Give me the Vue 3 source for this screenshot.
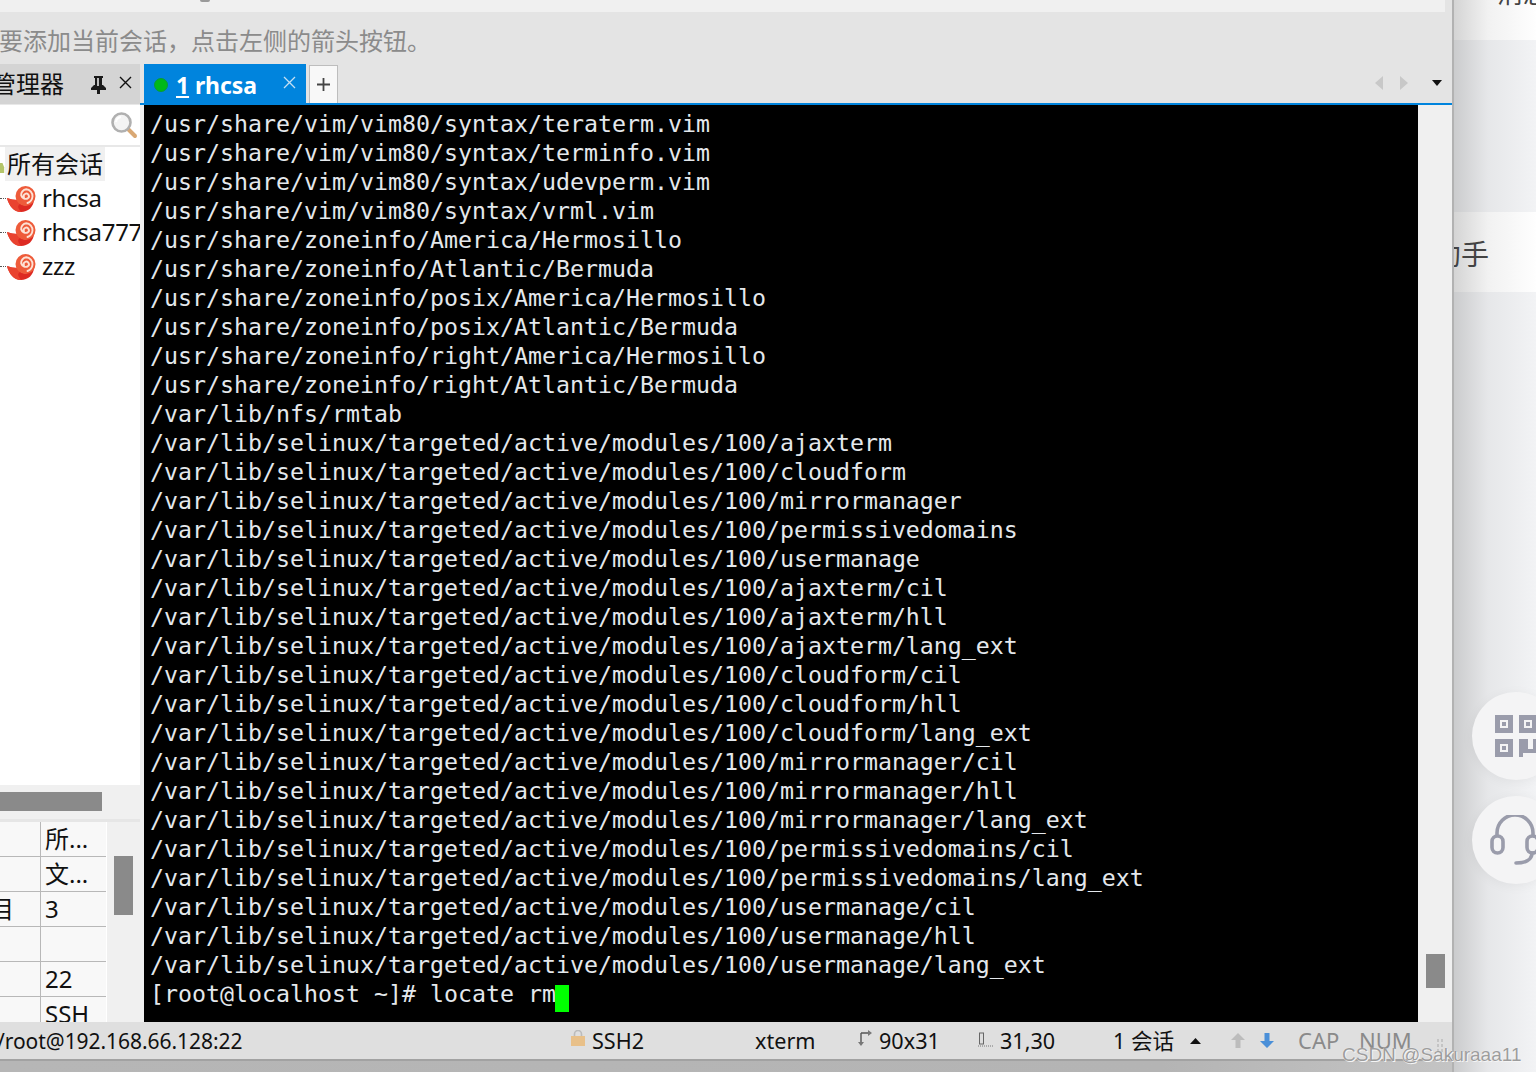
<script setup>
const lines = [
  '/usr/share/vim/vim80/syntax/teraterm.vim',
  '/usr/share/vim/vim80/syntax/terminfo.vim',
  '/usr/share/vim/vim80/syntax/udevperm.vim',
  '/usr/share/vim/vim80/syntax/vrml.vim',
  '/usr/share/zoneinfo/America/Hermosillo',
  '/usr/share/zoneinfo/Atlantic/Bermuda',
  '/usr/share/zoneinfo/posix/America/Hermosillo',
  '/usr/share/zoneinfo/posix/Atlantic/Bermuda',
  '/usr/share/zoneinfo/right/America/Hermosillo',
  '/usr/share/zoneinfo/right/Atlantic/Bermuda',
  '/var/lib/nfs/rmtab',
  '/var/lib/selinux/targeted/active/modules/100/ajaxterm',
  '/var/lib/selinux/targeted/active/modules/100/cloudform',
  '/var/lib/selinux/targeted/active/modules/100/mirrormanager',
  '/var/lib/selinux/targeted/active/modules/100/permissivedomains',
  '/var/lib/selinux/targeted/active/modules/100/usermanage',
  '/var/lib/selinux/targeted/active/modules/100/ajaxterm/cil',
  '/var/lib/selinux/targeted/active/modules/100/ajaxterm/hll',
  '/var/lib/selinux/targeted/active/modules/100/ajaxterm/lang_ext',
  '/var/lib/selinux/targeted/active/modules/100/cloudform/cil',
  '/var/lib/selinux/targeted/active/modules/100/cloudform/hll',
  '/var/lib/selinux/targeted/active/modules/100/cloudform/lang_ext',
  '/var/lib/selinux/targeted/active/modules/100/mirrormanager/cil',
  '/var/lib/selinux/targeted/active/modules/100/mirrormanager/hll',
  '/var/lib/selinux/targeted/active/modules/100/mirrormanager/lang_ext',
  '/var/lib/selinux/targeted/active/modules/100/permissivedomains/cil',
  '/var/lib/selinux/targeted/active/modules/100/permissivedomains/lang_ext',
  '/var/lib/selinux/targeted/active/modules/100/usermanage/cil',
  '/var/lib/selinux/targeted/active/modules/100/usermanage/hll',
  '/var/lib/selinux/targeted/active/modules/100/usermanage/lang_ext',
]
const sessions = ['rhcsa', 'rhcsa777', 'zzz']
const props = [
  ['', '所...'],
  ['', '文...'],
  ['目', '3'],
  ['', ''],
  ['', '22'],
  ['', 'SSH'],
]
</script>

<template>
  <div class="page">
    <div class="app">
      <div class="strip"><span class="stripmark"></span></div>
      <div class="hint">要添加当前会话，点击左侧的箭头按钮。</div>
      <div class="tabrow">
        <div class="panehead">
          <span class="panetitle">管理器</span>
          <svg class="pin" width="15" height="18" viewBox="0 0 15 18">
            <path d="M3 0h9v2h-1v7h1l3 3v2H9v4H6v-4H0v-2l3-3h1V2H3z" fill="#1a1a1a" />
            <path d="M6 2h2v8H6z" fill="#bdbdbd" />
          </svg>
          <svg class="paneclose" width="13" height="13" viewBox="0 0 13 13">
            <path d="M1 1l11 11M12 1L1 12" stroke="#111" stroke-width="1.4" fill="none" />
          </svg>
        </div>
        <div class="tab">
          <span class="dot"></span>
          <span class="tabname"><u>1</u> rhcsa</span>
          <svg class="tabclose" width="13" height="13" viewBox="0 0 13 13">
            <path d="M1 1l11 11M12 1L1 12" stroke="#c4dff3" stroke-width="1.3" fill="none" />
          </svg>
        </div>
        <div class="plus">
          <svg width="13" height="13" viewBox="0 0 13 13">
            <path d="M6.500 0v13M0 6.500h13" stroke="#444" stroke-width="1.800" fill="none" />
          </svg>
        </div>
        <div class="tabnav">
          <svg width="8" height="14" viewBox="0 0 8 14"><path d="M8 0v14L0 7z" fill="#c8c8c8" /></svg>
          <svg width="8" height="14" viewBox="0 0 8 14"><path d="M0 0v14l8-7z" fill="#c8c8c8" /></svg>
          <svg class="drop" width="10" height="6" viewBox="0 0 10 6"><path d="M0 0h10L5 6z" fill="#111" /></svg>
        </div>
      </div>
      <div class="main">
        <aside class="sidebar">
          <div class="panel">
            <div class="search">
              <svg width="28" height="28" viewBox="0 0 28 28">
                <path d="M18 18l7 7" stroke="#d9a874" stroke-width="4" stroke-linecap="round" />
                <circle cx="11.500" cy="11.500" r="9" fill="#f4f4f4" stroke="#b0b0b0" stroke-width="2.600" />
                <path d="M6 11a6 6 0 0 1 5-5" stroke="#fff" stroke-width="2" fill="none" />
              </svg>
            </div>
            <div class="tree">
              <div class="rootnode">
                <svg class="folder" width="6" height="16" viewBox="0 0 6 16"><path d="M0 2h3l2 5v7H0z" fill="#b4c56a" /></svg>
                <span class="rootlabel">所有会话</span>
              </div>
              <div v-for="s in sessions" :key="s" class="session">
                <span class="dots"></span>
                <svg class="snail" width="30" height="27" viewBox="0 0 30 27">
                  <path d="M1 13c3 1 7 2 10 2 2 4 6 6 10 5 3-.6 5-2 7-5-.5 7-6 12-13 12C8 27 3 21 1 13z" fill="#dd2a22" />
                  <path d="M1 13c3 1 7 2 10 2l3 4c-3 2-2 4 1 8C8 27 3 21 1 13z" fill="#e9432f" />
                  <circle cx="19.500" cy="11" r="10" fill="#ee5b3a" />
                  <path d="M18 12.500a2.600 2.600 0 1 1 3.600 1a4.800 4.800 0 0 1-6.400-3a5.600 5.600 0 0 1 5-6.200a6.800 6.800 0 0 1 6.300 7.200a7.500 7.500 0 0 1-5 6.500" fill="none" stroke="#fde2d6" stroke-width="1.900" stroke-linecap="round" />
                </svg>
                <span class="sname">{{ s }}</span>
              </div>
            </div>
          </div>
          <div class="hscroll"><span class="hthumb"></span></div>
          <div class="proppane">
            <div class="table">
              <div v-for="(row, i) in props" :key="i" class="trow">
                <span class="c1"><span>{{ row[0] }}</span></span>
                <span class="c2">{{ row[1] }}</span>
              </div>
            </div>
            <div class="vscroll"><span class="vthumb"></span></div>
          </div>
        </aside>
        <div class="terminal">
          <pre class="term"><template v-for="l in lines" :key="l">{{ l + '\n' }}</template>[root@localhost ~]# locate rm<span class="cursor"> </span></pre>
        </div>
        <div class="termscroll"><span class="termthumb"></span></div>
      </div>
      <div class="status">
        <span class="st st-path">/root@192.168.66.128:22</span>
        <span class="st st-ssh">
          <svg width="14" height="16" viewBox="0 0 14 16">
            <path d="M3.500 6V4a3.500 3.500 0 0 1 7 0v2" stroke="#bbb" stroke-width="1.600" fill="none" />
            <rect y="6" width="14" height="10" fill="#e8c089" />
          </svg>
          SSH2
        </span>
        <span class="st st-term">xterm</span>
        <span class="st st-size">
          <svg width="15" height="17" viewBox="0 0 15 17">
            <path d="M4 3v10M4 3h8" stroke="#555" stroke-width="1.400" fill="none" />
            <path d="M11 0l4 3-4 3zM1 12h6l-3 4z" fill="#777" />
          </svg>
          90x31
        </span>
        <span class="st st-pos">
          <svg width="15" height="15" viewBox="0 0 15 15">
            <rect x="1.500" y="1" width="4" height="11" fill="#ddd" stroke="#666" />
            <path d="M0 14h15" stroke="#777" stroke-dasharray="1 1" />
          </svg>
          31,30
        </span>
        <span class="st st-sess">1 会话</span>
        <svg class="st-up" width="11" height="6" viewBox="0 0 11 6"><path d="M0 6h11L5.500 0z" fill="#111" /></svg>
        <svg class="st-a1" width="14" height="15" viewBox="0 0 14 15"><path d="M7 0l7 7H9.500v8h-5V7H0z" fill="#bcbcbc" /></svg>
        <svg class="st-a2" width="14" height="15" viewBox="0 0 14 15"><path d="M7 15l7-7H9.500V0h-5v8H0z" fill="#4a8fd8" /></svg>
        <span class="st st-cap">CAP</span>
        <span class="st st-num">NUM</span>
        <span class="grip"></span>
      </div>
      <div class="bottom"></div>
    </div>
    <div class="side">
      <div class="card card-top"><span class="cardtop-text">消息</span></div>
      <div class="card card-mid"><span class="cardmid-text">助手</span></div>
      <div class="shade"></div>
      <div class="fab fab-qr">
        <svg width="44" height="44" viewBox="0 0 44 44" fill="#9a9cab">
          <path fill-rule="evenodd" d="M1 1h18v18H1zM6 6v8h8V6zM25 1h18v18H25zM30 6v8h8V6zM1 25h18v18H1zM6 30v8h8v-8z" />
          <path d="M8 8h4v4H8zM32 8h4v4h-4zM8 32h4v4H8z" />
          <path d="M25 25h9v10h5v-10h5v14H29v4h-4z" />
        </svg>
      </div>
      <div class="fab fab-help">
        <svg width="50" height="52" viewBox="0 0 50 52" fill="none" stroke="#9a9cab" stroke-width="3.600">
          <path d="M7 20v-2a18 18 0 0 1 36 0v2" />
          <rect x="2" y="21" width="11" height="17" rx="5.500" />
          <rect x="37" y="21" width="11" height="17" rx="5.500" />
          <path d="M42 38c0 7-7 10-16 10" stroke-linecap="round" />
        </svg>
      </div>
    </div>
    <div class="watermark">CSDN @Sakuraaa11</div>
  </div>
</template>

<style>
html, body { margin: 0; padding: 0; background: #f3f4f6; }
</style>

<style scoped>
.page {
  width: 1536px;
  height: 1072px;
  position: relative;
  overflow: hidden;
  display: flex;
  font-family: "Noto Sans", "Noto Sans CJK SC", sans-serif;
  background: #f3f4f6;
}
.app {
  width: 1452px;
  flex: none;
  display: flex;
  flex-direction: column;
  background: #e4e4e4;
  border-right: 2px solid #b2b2b2;
  box-sizing: content-box;
  overflow: hidden;
}
.strip {
  height: 12px;
  flex: none;
  width: 1445px;
  background: #f0f0f0;
  padding-left: 200px;
  box-sizing: border-box;
}
.stripmark {
  display: block;
  width: 10px;
  height: 2px;
  border-radius: 0 0 5px 5px;
  background: #9a9a9a;
}
.hint {
  height: 52px;
  flex: none;
  box-sizing: border-box;
  margin-left: -1px;
  font-size: 24px;
  line-height: 58px;
  color: #8b8b8b;
  background: #e4e4e4;
  white-space: nowrap;
}
.tabrow {
  height: 41px;
  flex: none;
  display: flex;
  align-items: stretch;
  background: #e4e4e4;
}
.panehead {
  width: 140px;
  flex: none;
  margin-right: 4px;
  height: 40px;
  display: flex;
  align-items: center;
  background: #d4d4d4;
  position: relative;
  overflow: hidden;
  border-bottom: 1px solid #e8e8e8;
  box-sizing: content-box;
}
.panetitle {
  font-size: 24px;
  line-height: 40px;
  color: #111;
  margin-left: -8px;
  width: 99px;
  flex: none;
  white-space: nowrap;
}
.pin { flex: none; margin-top: 1px; }
.paneclose { margin-left: 13px; flex: none; margin-top: -3px; }
.tab {
  width: 162px;
  flex: none;
  display: flex;
  align-items: center;
  background: #0084dd;
  box-sizing: border-box;
  padding-left: 10px;
}
.dot {
  width: 12px;
  height: 12px;
  border-radius: 50%;
  background: #00b917;
  border: 1px solid #0a9a3a;
  flex: none;
}
.tabname {
  margin-left: 8px;
  width: 107px;
  flex: none;
  font-size: 23px;
  font-weight: 700;
  letter-spacing: -0.1px;
  color: #fff;
  white-space: nowrap;
}
.tabclose { margin-top: -5px; flex: none; }
.plus {
  width: 27px;
  height: 37px;
  margin: 1px 0 0 3px;
  flex: none;
  background: #f8f8f8;
  border: 1px solid #bdbdbd;
  border-bottom: none;
  display: flex;
  align-items: center;
  justify-content: center;
  padding-bottom: 2px;
  box-sizing: content-box;
}
.tabnav {
  flex: 1;
  display: flex;
  align-items: center;
  padding-left: 1037px;
  padding-bottom: 2px;
  gap: 17px;
  box-sizing: border-box;
  margin-top: -2px;
}
.tabnav .drop { margin-left: 7px; }
.main {
  height: 917px;
  flex: none;
  display: flex;
  border-top: 2px solid #0084dd;
  margin-top: -2px;
  background: #f0f0f0;
}
.sidebar {
  width: 140px;
  flex: none;
  margin-right: 4px;
  display: flex;
  flex-direction: column;
  background: #f0f0f0;
}
.panel {
  height: 680px;
  flex: none;
  background: #fff;
  display: flex;
  flex-direction: column;
}
.search {
  height: 40px;
  flex: none;
  display: flex;
  align-items: center;
  justify-content: flex-end;
  padding-right: 2px;
  border-bottom: 2px solid #e8e8e8;
}
.tree {
  flex: 1;
  overflow: hidden;
  display: flex;
  flex-direction: column;
}
.rootnode {
  height: 34px;
  flex: none;
  display: flex;
  align-items: center;
}
.folder { width: 5px; flex: none; margin-top: 8px; }
.rootlabel {
  width: 100px;
  height: 34px;
  line-height: 34px;
  padding-left: 2px;
  box-sizing: border-box;
  background: #f0f0f0;
  font-size: 24px;
  color: #111;
  white-space: nowrap;
}
.session {
  height: 34px;
  flex: none;
  display: flex;
  align-items: center;
  white-space: nowrap;
}
.dots {
  width: 6px;
  flex: none;
  border-top: 1px dotted #555;
}
.snail { flex: none; margin-right: 6px; }
.sname {
  font-size: 24px;
  line-height: 32px;
  letter-spacing: -0.3px;
  color: #111;
}
.hscroll {
  height: 37px;
  flex: none;
  background: #f0f0f0;
  border-bottom: 3px solid #e6e6e6;
  box-sizing: border-box;
  display: flex;
  align-items: flex-start;
  padding-top: 7px;
}
.hthumb {
  width: 102px;
  height: 19px;
  background: #8a8a8a;
}
.proppane {
  flex: 1;
  display: flex;
  min-height: 0;
  overflow: hidden;
}
.table {
  width: 106px;
  flex: none;
  background: #f8f8f8;
  border-right: 1px solid #fff;
  box-sizing: content-box;
  overflow: hidden;
}
.trow {
  height: 34px;
  display: flex;
  border-bottom: 1px solid #b8b8b8;
  font-size: 24px;
  line-height: 33px;
  color: #111;
}
.trow:last-child { border-bottom: none; }
.c1 {
  width: 40px;
  flex: none;
  border-right: 1px solid #b8b8b8;
  overflow: hidden;
  display: flex;
  justify-content: flex-end;
}
.c1 span { margin-right: 26px; flex: none; }
.c2 {
  padding-left: 4px;
  white-space: nowrap;
  overflow: hidden;
}
.vscroll {
  width: 33px;
  flex: none;
  background: #f0f0f0;
  padding: 34px 0 0 7px;
  box-sizing: border-box;
}
.vthumb {
  display: block;
  width: 19px;
  height: 59px;
  background: #8a8a8a;
}
.terminal {
  width: 1274px;
  flex: none;
  background: #000;
  overflow: hidden;
}
.term {
  margin: 0;
  padding: 4px 0 0 6px;
  font-family: "DejaVu Sans Mono", monospace;
  font-size: 23.250px;
  line-height: 29px;
  color: #e4e8ec;
}
.cursor {
  display: inline-block;
  width: 14px;
  height: 27px;
  margin-left: -1px;
  vertical-align: -6px;
  background: #00ff00;
}
.termscroll {
  flex: 1;
  background: #f0f0f0;
  padding: 849px 0 0 8px;
  box-sizing: border-box;
}
.termthumb {
  display: block;
  width: 19px;
  height: 34px;
  background: #8a8a8a;
}
.status {
  height: 37px;
  flex: none;
  display: flex;
  align-items: center;
  background: #dfdfdf;
  border-bottom: 2px solid #a2a2a2;
  box-sizing: content-box;
  font-size: 21.600px;
  line-height: 35px;
  color: #111;
  white-space: nowrap;
}
.st { flex: none; display: flex; align-items: center; }
.st-path { margin: 1px 0 0 -3px; width: 574px; font-size: 21px; letter-spacing: -0.05px; }
.st-ssh { width: 184px; gap: 7px; }
.st-ssh svg { margin-top: -6px; }
.st-term { width: 102px; }
.st-size { width: 121px; gap: 7px; }
.st-size svg { margin-top: -4px; }
.st-pos { width: 136px; gap: 7px; }
.st-pos svg { margin-top: -2px; }
.st-sess { width: 77px; margin-left: -1px; }
.st-up { margin-right: 30px; flex: none; margin-top: 1px; }
.st-a1 { margin-right: 15px; flex: none; margin-top: -1px; }
.st-a2 { margin-right: 24px; flex: none; margin-top: -1px; }
.st-cap { width: 61px; color: #8a8a8a; font-size: 22px; }
.st-num { width: 69px; color: #8a8a8a; font-size: 22px; }
.grip {
  width: 8px;
  height: 14px;
  margin: 8px 0 0 8px;
  background-image: radial-gradient(circle, #c4c4c4 1.400px, transparent 1.500px);
  background-size: 4px 5px;
}
.bottom {
  flex: 1;
  background: linear-gradient(90deg, #b6b6b6, #b4b4b4 80%, #c4c4c4);
}
.side {
  flex: 1;
  position: relative;
  background: #f3f4f6;
  display: flex;
  flex-direction: column;
}
.card {
  background: #fff;
  overflow: hidden;
  white-space: nowrap;
  color: #333;
  flex: none;
}
.card-top { height: 40px; margin-bottom: 172px; }
.cardtop-text {
  display: block;
  margin: -25px 0 0 43px;
  font-size: 26px;
  line-height: 36px;
  color: #444;
}
.card-mid { height: 80px; }
.cardmid-text {
  display: block;
  margin-left: -21px;
  font-size: 28px;
  line-height: 84px;
  color: #444;
}
.fab {
  position: absolute;
  left: 18px;
  width: 88px;
  height: 88px;
  border-radius: 50%;
  background: #f4f4f5;
  box-shadow: 0 2px 12px rgba(0, 0, 0, 0.05);
  display: flex;
  align-items: center;
}
.fab-qr { top: 692px; }
.fab-qr svg { margin-left: 22px; }
.fab-help { top: 796px; }
.fab-help svg { margin-left: 18px; margin-top: 2px; }
.shade {
  position: absolute;
  inset: 0;
  pointer-events: none;
  background: linear-gradient(90deg, rgba(60, 60, 60, 0.22), rgba(60, 60, 60, 0.07) 34px, rgba(60, 60, 60, 0) 85px);
}
.watermark {
  position: absolute;
  left: 1342px;
  top: 1043px;
  font-family: "Liberation Sans", sans-serif;
  font-size: 19px;
  line-height: 24px;
  color: #9d9d9d;
  text-shadow: 0 0 1px #fff, 1px 1px 0 #f4f4f4;
  white-space: nowrap;
}
</style>
